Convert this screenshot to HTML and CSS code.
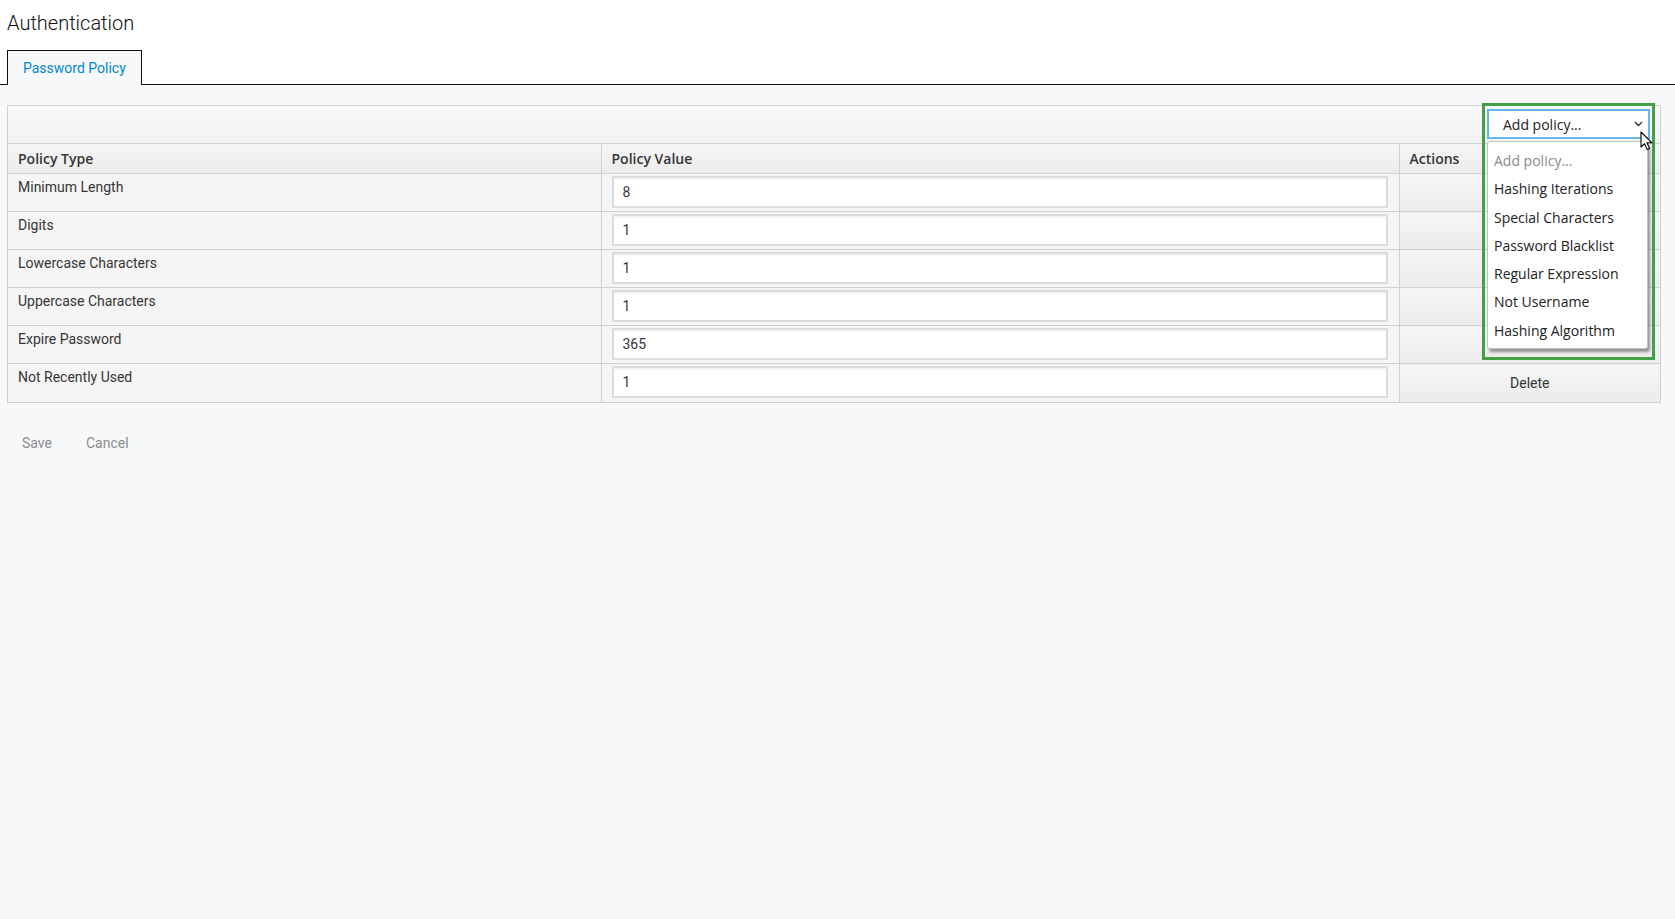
FILE: index.html
```html
<!doctype html>
<html>
<head>
<title>Authentication</title>
<link rel="stylesheet" href="styles.css">
</head>
<body>
<div class="top">
  <h1 class="title">Authentication</h1>
  <div class="tabs">
    <a class="tab active">Password Policy</a>
  </div>
</div>
<div class="content">
  <div class="panel">
    <div class="toolbar">
      <div class="picker">
        <div class="select">
          <span>Add policy...</span>
          <svg class="chev" width="9" height="6" viewBox="0 0 9 6"><path d="M1 1 L4.5 4.5 L8 1" fill="none" stroke="#333" stroke-width="1.4"/></svg>
        </div>
        <ul class="options">
          <li class="placeholder">Add policy...</li>
          <li>Hashing Iterations</li>
          <li>Special Characters</li>
          <li>Password Blacklist</li>
          <li>Regular Expression</li>
          <li>Not Username</li>
          <li>Hashing Algorithm</li>
        </ul>
        <div class="highlight"></div>
        <svg class="cursor" width="14" height="21" viewBox="0 0 14 21"><path d="M1 1 L1 16 L4.6 12.6 L7.2 18.6 L9.6 17.6 L7 11.8 L12 11.8 Z" fill="#fff" stroke="#000" stroke-width="1.1" stroke-linejoin="round"/></svg>
      </div>
    </div>
    <table class="policies">
      <colgroup><col class="c-type"><col class="c-value"><col class="c-actions"></colgroup>
      <thead>
        <tr><th>Policy Type</th><th>Policy Value</th><th>Actions</th></tr>
      </thead>
      <tbody>
        <tr><td class="name">Minimum Length</td><td class="value"><input type="text" value="8"></td><td class="act"></td></tr>
        <tr><td class="name">Digits</td><td class="value"><input type="text" value="1"></td><td class="act"></td></tr>
        <tr><td class="name">Lowercase Characters</td><td class="value"><input type="text" value="1"></td><td class="act"></td></tr>
        <tr><td class="name">Uppercase Characters</td><td class="value"><input type="text" value="1"></td><td class="act"></td></tr>
        <tr><td class="name">Expire Password</td><td class="value"><input type="text" value="365"></td><td class="act"></td></tr>
        <tr><td class="name">Not Recently Used</td><td class="value"><input type="text" value="1"></td><td class="act"><button>Delete</button></td></tr>
      </tbody>
    </table>
  </div>
  <div class="form-actions">
    <button class="link">Save</button>
    <button class="link">Cancel</button>
  </div>
</div>
</body>
</html>
```

FILE: styles.css
```css
html, body {
  margin: 0;
  padding: 0;
  height: 100%;
}
body {
  font-family: Roboto, "Liberation Sans", sans-serif;
  font-size: 14px;
  color: #363636;
  background: #f7f8fa;
  overflow: hidden;
}
.top {
  background: #fff;
}
.title {
  margin: 0;
  padding: 8px 7px 0;
  font-size: 20px;
  font-weight: 300;
  line-height: 30px;
  color: #111;
}
.tabs {
  display: flex;
  margin-top: 12px;
  padding-left: 7px;
  border-bottom: 1px solid #111;
}
.tab {
  border: 1px solid #111;
  border-bottom: none;
  margin-bottom: -1px;
  padding: 0 15px;
  line-height: 34px;
  background: #f7f8fa;
  color: #0088ce;
  font-size: 14px;
}
.content {
  padding: 20px 14px 0 7px;
}
.panel {
  border: 1px solid #d1d1d1;
  background: #f5f5f5;
}
.toolbar {
  height: 37px;
  display: flex;
  justify-content: flex-end;
  align-items: flex-start;
  padding-right: 10px;
  background: linear-gradient(#fafafa, #f1f1f1);
  border-bottom: 1px solid #d1d1d1;
}
.picker {
  position: relative;
  margin-top: 3px;
  font-family: "Open Sans", sans-serif;
}
.select {
  width: 140px;
  height: 26px;
  border: 2px solid #66b6ea;
  background: #fff;
  display: flex;
  align-items: center;
  justify-content: space-between;
  padding: 0 5px 0 14px;
  font-size: 14px;
  color: #222;
}
.options {
  position: absolute;
  left: 0;
  top: 32px;
  width: 159px;
  margin: 0;
  padding: 5px 0 3px;
  list-style: none;
  background: #fff;
  border: 1px solid #c4c4c4;
  border-radius: 3px;
  box-shadow: 2px 3px 3px rgba(0, 0, 0, 0.4);
  z-index: 2;
}
.options li {
  height: 28.3px;
  line-height: 28px;
  padding-left: 6px;
  font-size: 14px;
  color: #222;
  white-space: nowrap;
}
.options li.placeholder {
  color: #8a8a8a;
}
.highlight {
  position: absolute;
  left: -5px;
  top: -6px;
  width: 167px;
  height: 251px;
  border: 3px solid #43a047;
  z-index: 3;
  pointer-events: none;
}
.cursor {
  position: absolute;
  left: 153px;
  top: 22px;
  z-index: 4;
}
table.policies {
  width: 100%;
  border-collapse: collapse;
  table-layout: fixed;
}
.c-type { width: 593px; }
.c-value { width: 798px; }
.policies th {
  height: 29px;
  padding: 0 10px;
  text-align: left;
  font-family: "Open Sans", sans-serif;
  font-weight: 600;
  font-size: 14px;
  color: #363636;
  background: linear-gradient(#f5f5f5, #ececec);
  border-left: 1px solid #d1d1d1;
  border-bottom: 1px solid #d1d1d1;
}
.policies th:first-child { border-left: none; }
.policies tbody tr {
  height: 38px;
}
.policies td {
  padding: 0 10px;
  border-left: 1px solid #d1d1d1;
  border-top: 1px solid #d1d1d1;
}
.policies tr:first-child td { border-top: none; }
.policies td:first-child { border-left: none; }
.policies td.name {
  vertical-align: top;
  padding-top: 4px;
  line-height: 18px;
}
.policies td.value {
  vertical-align: top;
  padding: 2px 11px 0 10px;
}
.policies input {
  display: block;
  width: 100%;
  height: 32px;
  box-sizing: border-box;
  border: 2px solid #dcdcdc;
  box-shadow: inset 0 1px 2px rgba(0, 0, 0, 0.08);
  padding: 0 9px;
  font-family: Roboto, sans-serif;
  font-size: 14px;
  color: #363636;
  background: #fff;
}
.policies td.act {
  padding: 0;
  background: linear-gradient(#f6f6f6, #ebebeb);
}
.act button {
  display: block;
  width: 100%;
  height: 36px;
  border: none;
  background: transparent;
  font-family: Roboto, sans-serif;
  font-size: 14px;
  color: #363636;
}
.form-actions {
  display: flex;
  gap: 4px;
  margin-top: 23px;
}
.link {
  border: none;
  background: transparent;
  padding: 0 15px;
  height: 34px;
  font-family: Roboto, sans-serif;
  font-size: 14px;
  color: #8b8d8f;
}
```
